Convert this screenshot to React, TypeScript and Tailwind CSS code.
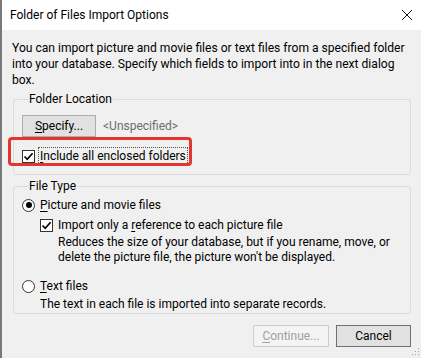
import React from 'react';

const font = { fontFamily: 'Roboto, "Segoe UI", sans-serif' };

function CheckBox({ checked }: { checked: boolean }) {
  return (
    <span className="flex size-[13px] shrink-0 items-center justify-center border border-[#333333] bg-white">
      {checked && (
        <svg width="11" height="11" viewBox="0 0 11 11">
          <path d="M1.5 5.5 L4.2 8.3 L9.6 2.2" fill="none" stroke="#000" strokeWidth="1.7" />
        </svg>
      )}
    </span>
  );
}

function Radio({ checked }: { checked: boolean }) {
  return (
    <span className="flex size-[13px] shrink-0 items-center justify-center rounded-full border border-[#333333] bg-white">
      {checked && <span className="size-[6px] rounded-full bg-black" />}
    </span>
  );
}

export default function App() {
  return (
    <div
      className="relative h-[358px] w-[421px] overflow-hidden border-l-2 border-[#787878] bg-[#f0f0f0] text-[12px] leading-[16px] text-black"
      style={font}
    >
      {/* title bar */}
      <div className="flex h-[30px] items-center justify-between bg-white pl-[8px] pr-[6px]">
        <span className="text-[12px]">Folder of Files Import Options</span>
        <svg width="12" height="12" viewBox="0 0 12 12" className="mr-[2px]">
          <path d="M1 1 L11 11 M11 1 L1 11" stroke="#111" strokeWidth="1" />
        </svg>
      </div>

      <div className="pl-[10px] pr-[10px] pt-[10px]">
        <p className="whitespace-nowrap text-[12.1px] leading-[16px]">
          You can import picture and movie files or text files from a specified folder
          <br />
          into your database. Specify which fields to import into in the next dialog
          <br />
          box.
        </p>

        {/* Folder Location */}
        <fieldset className="ml-[1px] mt-[3px] rounded-[3px] border border-[#dcdcdc] pb-[9px] pl-[8px]">
          <legend className="ml-[6px] px-[1px]">Folder Location</legend>
          <div className="flex items-center pt-[8px]">
            <button className="h-[22px] w-[74px] border border-[#adadad] bg-[#e1e1e1]">
              <span className="underline underline-offset-2">S</span>pecify...
            </button>
            <span className="ml-[7px] text-[#6d6d6d]">&lt;Unspecified&gt;</span>
          </div>
          <div className="relative mt-[10px] flex items-center">
            <CheckBox checked />
            <span className="ml-[3px] border border-dotted border-[#555] px-[1px]">
              <span className="underline underline-offset-2">I</span>nclude all enclosed folders
            </span>
            <div className="absolute -left-[14px] -top-[10px] h-[29px] w-[184px] rounded-[4px] border-[3px] border-[#e2372f]" />
          </div>
        </fieldset>

        {/* File Type */}
        <fieldset className="ml-[1px] mt-[3px] rounded-[3px] border border-[#dcdcdc] pb-[1px] pl-[8px]">
          <legend className="ml-[6px] px-[1px]">File Type</legend>
          <div className="mt-[3px] flex items-center gap-[5px]">
            <Radio checked />
            <span>
              <span className="underline underline-offset-2">P</span>icture and movie files
            </span>
          </div>
          <div className="ml-[18px] mt-[4px] flex items-center gap-[5px]">
            <CheckBox checked />
            <span>
              Import only a <span className="underline underline-offset-2">r</span>eference to each picture file
            </span>
          </div>
          <p className="ml-[36px] mt-[2px] leading-[15px]">
            Reduces the size of your database, but if you rename, move, or
            <br />
            delete the picture file, the picture won't be displayed.
          </p>
          <div className="mt-[13px] flex items-center gap-[5px]">
            <Radio checked={false} />
            <span>
              <span className="underline underline-offset-2">T</span>ext files
            </span>
          </div>
          <p className="ml-[18px] mt-[2px]">The text in each file is imported into separate records.</p>
        </fieldset>

        <div className="mt-[11px] flex justify-end gap-[7px]">
          <button className="h-[22px] w-[76px] border border-[#cccccc] bg-[#f4f4f4] text-[#a0a0a0]">
            <span className="underline underline-offset-2">C</span>ontinue...
          </button>
          <button className="h-[22px] w-[75px] border border-[#707070] bg-[#e1e1e1]">Cancel</button>
        </div>
      </div>

      {/* resize grip */}
      <svg width="9" height="9" viewBox="0 0 9 9" className="absolute bottom-[2px] right-[1px]">
        {[
          [7, 1],
          [7, 4],
          [4, 4],
          [7, 7],
          [4, 7],
          [1, 7],
        ].map(([x, y], i) => (
          <rect key={i} x={x} y={y} width="1" height="1" fill="#a0a0a0" />
        ))}
      </svg>
    </div>
  );
}
